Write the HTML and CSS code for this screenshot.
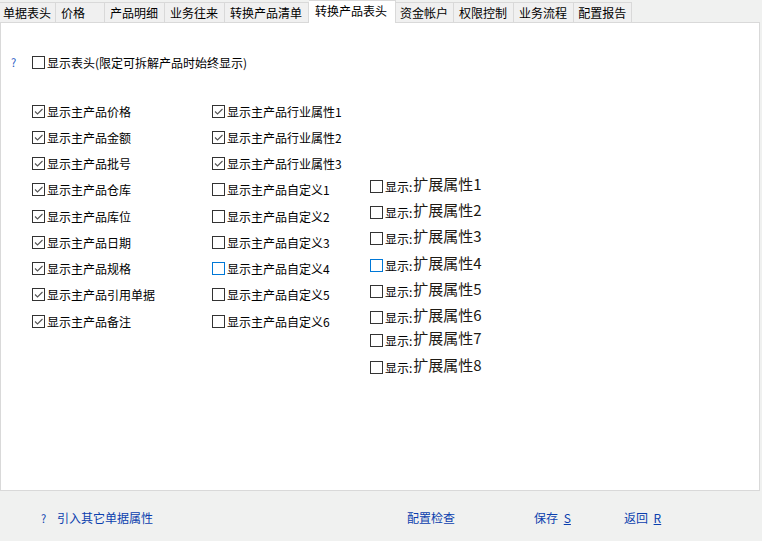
FILE: index.html
```html
<!DOCTYPE html>
<html lang="zh-CN">

<head>
    <meta charset="utf-8">
    <title>转换产品表头</title>
    <link rel="stylesheet" href="styles.css">
</head>

<body>
    <div class="window">
        <div class="tabs">
            <div class="tab">单据表头</div>
            <div class="tab tab-wide">价格</div>
            <div class="tab">产品明细</div>
            <div class="tab">业务往来</div>
            <div class="tab">转换产品清单</div>
            <div class="tab active">转换产品表头</div>
            <div class="tab tab-narrow">资金帐户</div>
            <div class="tab">权限控制</div>
            <div class="tab">业务流程</div>
            <div class="tab tab-narrow">配置报告</div>
        </div>

        <div class="panel">
            <div class="head-row">
                <span class="help">?</span>
                <label class="opt"><span class="box"></span>显示表头(限定可拆解产品时始终显示)</label>
            </div>

            <div class="columns">
                <div class="col col-1">
                    <label class="opt"><span class="box checked"></span>显示主产品价格</label>
                    <label class="opt"><span class="box checked"></span>显示主产品金额</label>
                    <label class="opt"><span class="box checked"></span>显示主产品批号</label>
                    <label class="opt"><span class="box checked"></span>显示主产品仓库</label>
                    <label class="opt"><span class="box checked"></span>显示主产品库位</label>
                    <label class="opt"><span class="box checked"></span>显示主产品日期</label>
                    <label class="opt"><span class="box checked"></span>显示主产品规格</label>
                    <label class="opt"><span class="box checked"></span>显示主产品引用单据</label>
                    <label class="opt"><span class="box checked"></span>显示主产品备注</label>
                </div>
                <div class="col col-2">
                    <label class="opt"><span class="box checked"></span>显示主产品行业属性1</label>
                    <label class="opt"><span class="box checked"></span>显示主产品行业属性2</label>
                    <label class="opt"><span class="box checked"></span>显示主产品行业属性3</label>
                    <label class="opt"><span class="box"></span>显示主产品自定义1</label>
                    <label class="opt"><span class="box"></span>显示主产品自定义2</label>
                    <label class="opt"><span class="box"></span>显示主产品自定义3</label>
                    <label class="opt"><span class="box hover"></span>显示主产品自定义4</label>
                    <label class="opt"><span class="box"></span>显示主产品自定义5</label>
                    <label class="opt"><span class="box"></span>显示主产品自定义6</label>
                </div>
                <div class="col col-3">
                    <label class="opt"><span class="box"></span>显示:<span class="ext">扩展属性1</span></label>
                    <label class="opt"><span class="box"></span>显示:<span class="ext">扩展属性2</span></label>
                    <label class="opt"><span class="box"></span>显示:<span class="ext">扩展属性3</span></label>
                    <label class="opt"><span class="box hover"></span>显示:<span class="ext">扩展属性4</span></label>
                    <label class="opt"><span class="box"></span>显示:<span class="ext">扩展属性5</span></label>
                    <label class="opt"><span class="box"></span>显示:<span class="ext">扩展属性6</span></label>
                    <label class="opt tight"><span class="box"></span>显示:<span class="ext">扩展属性7</span></label>
                    <label class="opt"><span class="box"></span>显示:<span class="ext">扩展属性8</span></label>
                </div>
            </div>
        </div>

        <div class="footer">
            <a class="link link-import"><span class="help">?</span>引入其它单据属性</a>
            <a class="link link-check">配置检查</a>
            <a class="link link-save">保存 <u>S</u></a>
            <a class="link link-back">返回 <u>R</u></a>
        </div>
    </div>
</body>

</html>
```

FILE: styles.css
```css
body {
    margin: 0;
    background-color: #fff;
    font-family: "Noto Sans CJK SC", sans-serif;
    font-size: 12px;
    color: #000;
}

.window {
    width: 762px;
    height: 541px;
    background-color: #f0f1f0;
}

/* tab strip */
.tabs {
    display: flex;
    height: 22px;
    align-items: flex-end;
}

.tab {
    height: 19px;
    line-height: 19px;
    padding: 0 6px 0 5px;
    border: 1px solid #d9d9d9;
    border-bottom: none;
    border-left: none;
    background-color: #f0f0f0;
    white-space: nowrap;
}

.tab:first-child {
    padding: 0 4px 0 3px;
}

.tab-wide {
    width: 37px;
}

.tab-narrow {
    padding: 0 5px 0 4px;
}

.tab.active {
    height: 22px;
    line-height: 20px;
    padding: 0 8px 0 6px;
    margin-bottom: -1px;
    background-color: #fff;
    position: relative;
}

/* content panel */
.panel {
    width: 748px;
    height: 436px;
    padding: 31px 0 0 10px;
    border: 1px solid #d9d9d9;
    background-color: #fff;
}

.head-row {
    display: flex;
    align-items: center;
    height: 16px;
}

.help {
    width: 21px;
    color: #1f5bc4;
    font-size: 11px;
    line-height: 16px;
}

.opt {
    display: flex;
    align-items: center;
    height: 26.25px;
    white-space: nowrap;
}

.head-row .opt {
    height: 16px;
}

.box {
    width: 11px;
    height: 11px;
    margin-right: 2px;
    border: 1px solid #333;
    background-color: #fff;
    flex-shrink: 0;
}

.box.hover {
    border-color: #0078d7;
}

.box.checked {
    background-image: url("data:image/svg+xml,%3Csvg xmlns='http://www.w3.org/2000/svg' width='11' height='11'%3E%3Cpolyline points='2,5.5 4.5,8 9.5,3' fill='none' stroke='%23555' stroke-width='1.1'/%3E%3C/svg%3E");
}

.columns {
    display: flex;
    margin-top: 28px;
    padding-left: 21px;
}

.col {
    display: flex;
    flex-direction: column;
}

.col-1 {
    width: 180px;
}

.col-2 {
    width: 158px;
}

.col-3 {
    margin-top: 75px;
}

.col-3 .opt {
    height: 26.3px;
}

.col-3 .opt.tight {
    margin-top: -3px;
}

.ext {
    margin-left: 1px;
    font-size: 15px;
    color: #1e1a14;
    transform: translateY(-3px);
}

/* bottom bar */
.footer {
    display: flex;
    align-items: center;
    height: 51px;
    margin-top: 1px;
    padding-left: 41px;
}

.link {
    color: #0b3fae;
    white-space: nowrap;
    cursor: pointer;
}

.link u {
    margin-left: 3px;
}

.link .help {
    display: inline-block;
    width: 16px;
    color: #0b3fae;
}

.link-check {
    margin-left: 254px;
}

.link-save {
    margin-left: 79px;
}

.link-back {
    margin-left: 53px;
}
```
